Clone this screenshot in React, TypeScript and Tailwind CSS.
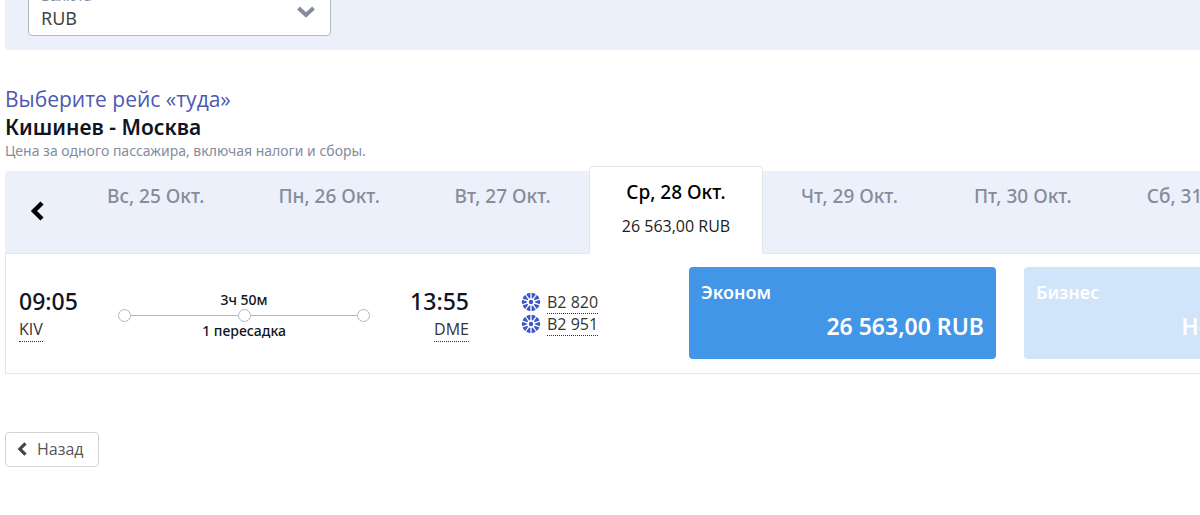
import React from 'react';
import clsx from 'clsx';

interface DayTab {
    label: string;
    price?: string;
}

interface Cabin {
    name: string;
    price: string;
    available: boolean;
}

const days: DayTab[] = [
    { label: 'Вс, 25 Окт.' },
    { label: 'Пн, 26 Окт.' },
    { label: 'Вт, 27 Окт.' },
    { label: 'Ср, 28 Окт.', price: '26 563,00 RUB' },
    { label: 'Чт, 29 Окт.' },
    { label: 'Пт, 30 Окт.' },
    { label: 'Сб, 31 Окт.' },
];

const cabins: Cabin[] = [
    { name: 'Эконом', price: '26 563,00 RUB', available: true },
    { name: 'Бизнес', price: 'Недоступно', available: false },
];

const flights = ['B2 820', 'B2 951'];

const spokes = [0, 36, 72, 108, 144, 180, 216, 252, 288, 324];

function Chevron({ className }: { className?: string }) {
    return (
        <svg viewBox="0 0 14 20" fill="none" stroke="currentColor" strokeWidth="4.5" className={className} aria-hidden="true">
            <path d="M12 2L4 10L12 18" />
        </svg>
    );
}

function AirlineLogo() {
    return (
        <svg viewBox="0 0 20 20" className="w-5 h-5 text-[#3d57c9]" fill="currentColor" aria-hidden="true">
            <circle cx="10" cy="10" r="2.2" />
            {spokes.map((angle) => (
                <path key={angle} d="M9.4 5.8L7.8 1.3Q10 0.2 12.2 1.3L10.6 5.8Q10 6.8 9.4 5.8Z" transform={`rotate(${angle + 18} 10 10)`} />
            ))}
        </svg>
    );
}

function CurrencyPanel() {
    return (
        <div className="bg-[#ecf0fa] rounded-b-sm pl-[23px] pb-[14px]">
            <div className="relative w-[303px] h-[50px] bg-white border border-[#b4b8c2] rounded-sm">
                <label htmlFor="currency" className="block pl-3 text-sm leading-[18px] text-[#858c9c]">Валюта</label>
                <select id="currency" className="block w-full h-[26px] pl-3 appearance-none bg-transparent text-lg leading-6 text-[#444]">
                    <option>RUB</option>
                </select>
                <svg viewBox="0 0 18 12" className="absolute right-[15px] top-[19px] w-[18px] h-3 text-[#858c9c] pointer-events-none" fill="none" stroke="currentColor" strokeWidth="4">
                    <path d="M1.5 2L9 9L16.5 2" />
                </svg>
            </div>
        </div>
    );
}

function DayTabs() {
    return (
        <div className="flex bg-[#ecf0fa] rounded-t-sm h-[82px]">
            <button type="button" aria-label="Предыдущие даты" className="w-16 pb-[2px] shrink-0 flex items-center justify-center">
                <Chevron className="w-[14px] h-5 text-black" />
            </button>
            <div className="grid grid-cols-7 flex-1">
                {days.map((day) => (
                    <button
                        key={day.label}
                        type="button"
                        className={clsx(
                            'flex flex-col items-center text-[19px] font-medium leading-6 pt-[13px]',
                            day.price
                                ? 'bg-white text-black border border-b-0 border-[#e4e6ea] rounded-t-sm -mt-[5px] -mb-px'
                                : 'text-[#858c9c]'
                        )}
                    >
                        {day.label}
                        {day.price && <span className="mt-[10px] font-['Open_Sans'] text-base font-normal leading-6 text-[#222]">{day.price}</span>}
                    </button>
                ))}
            </div>
            <div className="w-[62px] shrink-0" />
        </div>
    );
}

function Airport({ time, code, right }: { time: string; code: string; right?: boolean }) {
    return (
        <div className={clsx('flex flex-col', right ? 'items-end' : 'items-start')}>
            <span className="text-[23px] font-medium leading-8 text-[#101522]">{time}</span>
            <a href="#" className="border-b border-dotted border-[#333] font-['Open_Sans'] text-base leading-6 text-[#333]">{code}</a>
        </div>
    );
}

function Route() {
    return (
        <div className="w-[252px] text-center text-sm font-medium leading-4 text-[#101522]">
            <p>3ч 50м</p>
            <div className="flex items-center mt-px">
                <span className="w-[13px] h-[13px] rounded-full border border-[#b4b8c2]" />
                <span className="flex-1 h-px bg-[#b4b8c2]" />
                <span className="w-[13px] h-[13px] rounded-full border border-[#b4b8c2]" />
                <span className="flex-1 h-px bg-[#b4b8c2]" />
                <span className="w-[13px] h-[13px] rounded-full border border-[#b4b8c2]" />
            </div>
            <p className="mt-px">1 пересадка</p>
        </div>
    );
}

function FlightCard() {
    return (
        <div className="flex border border-[#e4e6ea] p-[13px] pb-[14px]">
            <div className="flex pt-[18px] w-[670px] shrink-0">
                <div className="w-[99px]">
                    <Airport time="09:05" code="KIV" />
                </div>
                <div className="pt-[7px]">
                    <Route />
                </div>
                <div className="w-[99px]">
                    <Airport time="13:55" code="DME" right />
                </div>
                <ul className="ml-[52px] pt-[6px]">
                    {flights.map((flight) => (
                        <li key={flight} className="flex items-center gap-[6px] h-[22px]">
                            <AirlineLogo />
                            <a href="#" className="border-b border-dotted border-[#333] font-['Open_Sans'] text-base leading-[22px] text-[#333]">{flight}</a>
                        </li>
                    ))}
                </ul>
            </div>
            <div className="grid grid-cols-2 gap-7 flex-1">
                {cabins.map((cabin) => (
                    <button
                        key={cabin.name}
                        type="button"
                        disabled={!cabin.available}
                        className={clsx(
                            'flex flex-col items-start h-[92px] px-3 pt-[13px] rounded-sm text-white font-semibold',
                            cabin.available ? 'bg-[#4296e8]' : 'bg-[#d0e5fa]'
                        )}
                    >
                        <span className="text-lg leading-6">{cabin.name}</span>
                        <span className="mt-[6px] self-end text-[23px] leading-8">{cabin.price}</span>
                    </button>
                ))}
            </div>
        </div>
    );
}

export default function App() {
    return (
        <div className="overflow-hidden bg-white font-['Noto_Sans',sans-serif]">
            <main className="min-w-[1345px] -mt-[14px] pl-[5px] pb-12">
                <CurrencyPanel />
                <h1 className="mt-[33px] font-['Open_Sans'] text-[21px] leading-8 text-[#4c59b0]">Выберите рейс «туда»</h1>
                <h2 className="text-[21px] font-semibold leading-6 text-[#101522]">Кишинев - Москва</h2>
                <p className="text-sm leading-6 text-[#858c9c]">Цена за одного пассажира, включая налоги и сборы.</p>
                <section className="mt-2">
                    <DayTabs />
                    <FlightCard />
                </section>
                <button type="button" className="mt-[58px] h-[35px] pl-[11px] pr-[14px] pb-px flex items-center gap-[10px] border border-[#d4d4d4] rounded-sm font-['Open_Sans'] text-base text-[#555]">
                    <Chevron className="w-[10px] h-[14px] text-[#444]" />
                    Назад
                </button>
            </main>
        </div>
    );
}
